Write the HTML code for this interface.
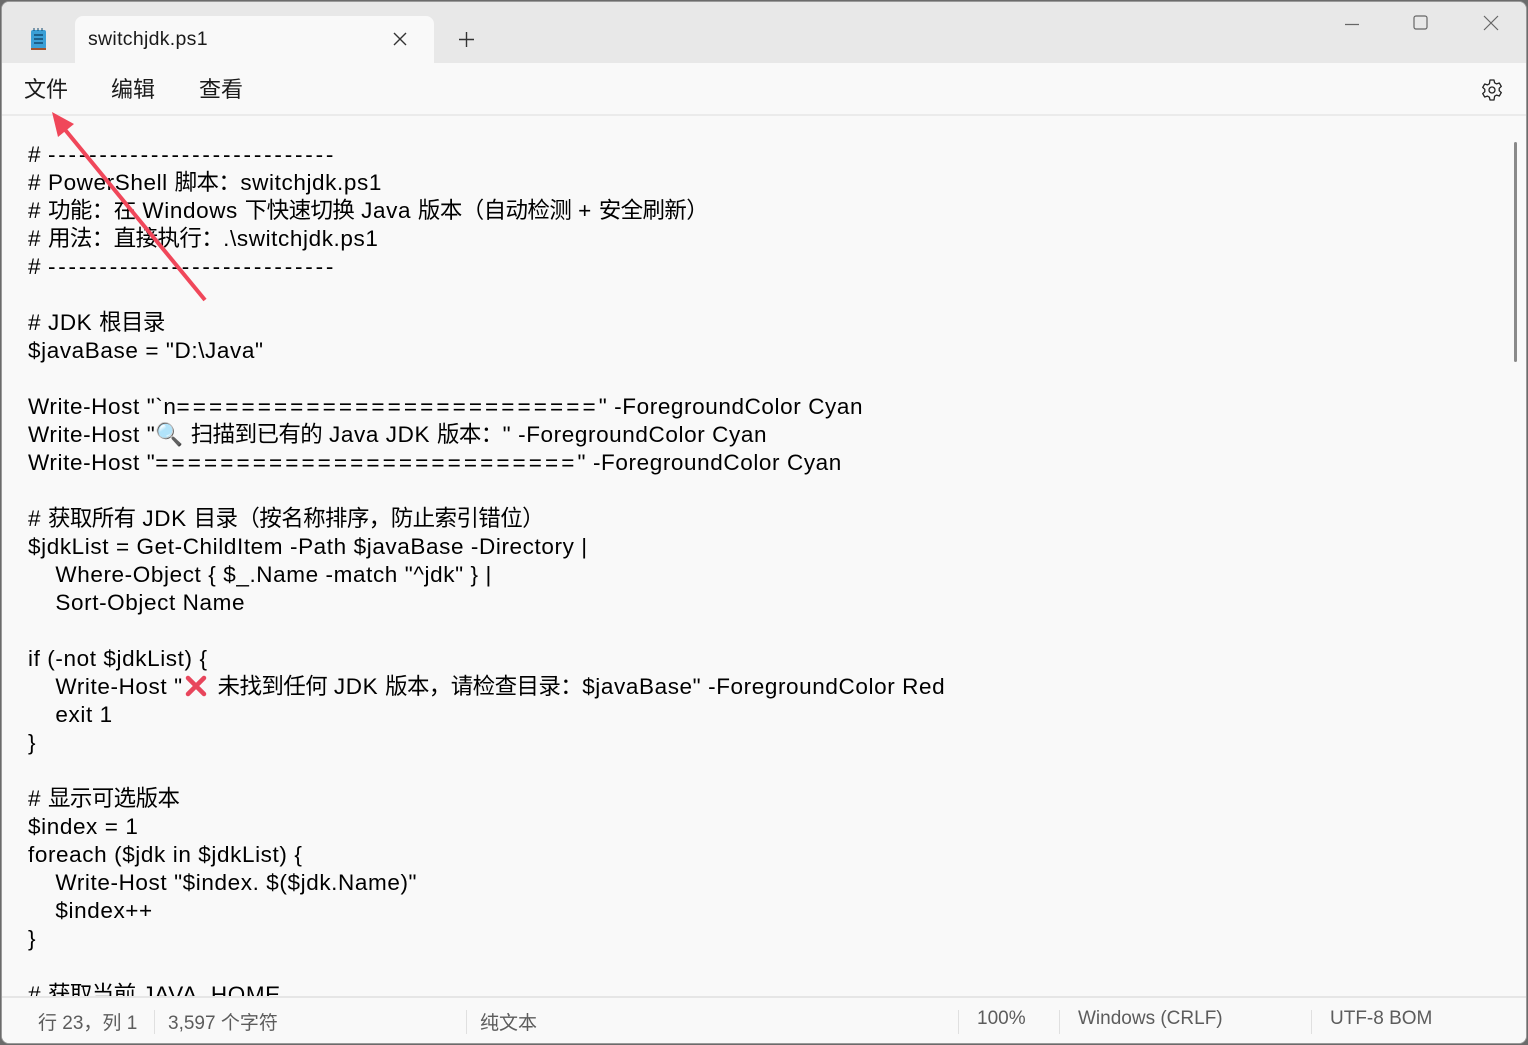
<!DOCTYPE html>
<html><head><meta charset="utf-8"><style>
*{margin:0;padding:0;box-sizing:border-box}
body{width:1528px;height:1045px;background:#6b6b6b;position:relative;overflow:hidden;font-family:"Liberation Sans","Noto Sans CJK SC",sans-serif}
.win{position:absolute;left:1px;top:1px;width:1526px;height:1043px;background:#f9f9f9;border:1px solid #9a9a9a;border-radius:8px;overflow:hidden}
.title{position:absolute;left:0;top:0;width:100%;height:61px;background:#e8e8e8}
.tab{position:absolute;left:73px;top:14px;width:359px;height:48px;background:#f9f9f9;border-radius:8px 8px 0 0}
.tab span{position:absolute;left:13px;top:12px;font-size:19.5px;color:#1a1a1a;letter-spacing:0.3px}
.menu{position:absolute;top:70px;font-size:22px;color:#1a1a1a}
.sep{position:absolute;left:0;top:112px;width:100%;height:2px;background:#ebebeb}
.l{position:absolute;left:26px;font-size:22.5px;line-height:28px;white-space:pre;color:#000;letter-spacing:0.6px}
.l b{font-weight:normal;letter-spacing:-0.6px}
.e{letter-spacing:3.1px}
.d{letter-spacing:2.8px}
.sb{position:absolute;left:0;top:994px;width:100%;height:50px;background:#f9f9f9;border-top:2px solid #e6e6e6}
.st{position:absolute;top:1006px;font-size:19px;color:#5c5c5c}
.vs{position:absolute;top:1008px;width:1px;height:24px;background:#e0e0e0}
</style></head><body>
<div class="win">
<div class="title"></div>
<svg style="position:absolute;left:27px;top:25px" width="20" height="26" viewBox="0 0 20 26"><rect x="2" y="3" width="15" height="19" rx="2" fill="#3a9fd6"/><rect x="2" y="21" width="15" height="2" fill="#a0522d"/><g stroke="#124a70" stroke-width="1.5"><line x1="5" y1="8" x2="14" y2="8"/><line x1="5" y1="12" x2="14" y2="12"/><line x1="5" y1="16" x2="14" y2="16"/></g><g stroke="#124a70" stroke-width="1"><line x1="5" y1="1" x2="5" y2="4"/><line x1="9" y1="1" x2="9" y2="4"/><line x1="13" y1="1" x2="13" y2="4"/></g></svg>
<div class="tab"><span>switchjdk.ps1</span>
<svg style="position:absolute;left:318px;top:16px" width="14" height="14"><path d="M1 1L13 13M13 1L1 13" stroke="#333" stroke-width="1.4"/></svg></div>
<svg style="position:absolute;left:456px;top:29px" width="17" height="17"><path d="M8.5 1V16M1 8.5H16" stroke="#333" stroke-width="1.4"/></svg>
<svg style="position:absolute;left:1342px;top:21px" width="16" height="4"><path d="M1 1.5H15" stroke="#666" stroke-width="1.2"/></svg>
<svg style="position:absolute;left:1411px;top:13px" width="16" height="16"><rect x="1" y="1" width="13" height="13" rx="2" fill="none" stroke="#666" stroke-width="1.2"/></svg>
<svg style="position:absolute;left:1481px;top:13px" width="17" height="17"><path d="M1 1L15 15M15 1L1 15" stroke="#666" stroke-width="1.2"/></svg>
<div class="menu" style="left:22px">文件</div>
<div class="menu" style="left:109px">编辑</div>
<div class="menu" style="left:197px">查看</div>
<svg style="position:absolute;left:1478px;top:76px" width="24" height="24" viewBox="0 0 24 24"><path d="M10 2h4l.6 2.8 2 1.1 2.7-.9 2 3.4-2.1 1.9v2.4l2.1 1.9-2 3.4-2.7-.9-2 1.1L14 22h-4l-.6-2.8-2-1.1-2.7.9-2-3.4 2.1-1.9v-2.4L2.7 9.4l2-3.4 2.7.9 2-1.1z" fill="none" stroke="#222" stroke-width="1.3" stroke-linejoin="round"/><circle cx="12" cy="12" r="3" fill="none" stroke="#222" stroke-width="1.3"/></svg>
<div class="sep"></div>
<div class="l" style="top:139px"># <span class="d">----------------------------</span></div>
<div class="l" style="top:167px"># PowerShell <b>脚本：</b>switchjdk.ps1</div>
<div class="l" style="top:195px"># <b>功能：在</b> Windows <b>下快速切换</b> Java <b>版本（自动检测</b> + <b>安全刷新）</b></div>
<div class="l" style="top:223px"># <b>用法：直接执行：</b>.\switchjdk.ps1</div>
<div class="l" style="top:251px"># <span class="d">----------------------------</span></div>
<div class="l" style="top:307px"># JDK <b>根目录</b></div>
<div class="l" style="top:335px">$javaBase = "D:\Java"</div>
<div class="l" style="top:391px">Write-Host "`n<span class="e">==========================</span>" -ForegroundColor Cyan</div>
<div class="l" style="top:419px">Write-Host "<span style="color:#3aa7d8">🔍</span> <b>扫描到已有的</b> Java JDK <b>版本：</b>" -ForegroundColor Cyan</div>
<div class="l" style="top:447px">Write-Host "<span class="e">==========================</span>" -ForegroundColor Cyan</div>
<div class="l" style="top:503px"># <b>获取所有</b> JDK <b>目录（按名称排序，防止索引错位）</b></div>
<div class="l" style="top:531px">$jdkList = Get-ChildItem -Path $javaBase -Directory |</div>
<div class="l" style="top:559px">    Where-Object { $_.Name -match "^jdk" } |</div>
<div class="l" style="top:587px">    Sort-Object Name</div>
<div class="l" style="top:643px">if (-not $jdkList) {</div>
<div class="l" style="top:671px">    Write-Host "<svg width="28" height="22" viewBox="0 0 28 22" style="vertical-align:-3px"><path d="M5 3L21 19M21 3L5 19" stroke="#e8465c" stroke-width="4.5" stroke-linecap="round"/></svg> <b>未找到任何</b> JDK <b>版本，请检查目录：</b>$javaBase" -ForegroundColor Red</div>
<div class="l" style="top:699px">    exit 1</div>
<div class="l" style="top:727px">}</div>
<div class="l" style="top:783px"># <b>显示可选版本</b></div>
<div class="l" style="top:811px">$index = 1</div>
<div class="l" style="top:839px">foreach ($jdk in $jdkList) {</div>
<div class="l" style="top:867px">    Write-Host "$index. $($jdk.Name)"</div>
<div class="l" style="top:895px">    $index++</div>
<div class="l" style="top:923px">}</div>
<div class="l" style="top:979px"># <b>获取当前</b> JAVA_HOME</div>
<div style="position:absolute;left:1512px;top:140px;width:3px;height:220px;background:#8a8a8a;border-radius:2px"></div>
<div class="sb"></div>
<div class="st" style="left:36px">行 23，列 1</div>
<div class="vs" style="left:152px"></div>
<div class="st" style="left:166px">3,597 个字符</div>
<div class="vs" style="left:464px"></div>
<div class="st" style="left:478px">纯文本</div>
<div class="vs" style="left:956px"></div>
<div class="st" style="left:975px">100%</div>
<div class="vs" style="left:1057px"></div>
<div class="st" style="left:1076px">Windows (CRLF)</div>
<div class="vs" style="left:1309px"></div>
<div class="st" style="left:1328px">UTF-8 BOM</div>
</div>
<svg style="position:absolute;left:0;top:0" width="1528" height="1045"><line x1="205" y1="300" x2="62" y2="126" stroke="#f0475a" stroke-width="4"/><polygon points="52,112 74,124 58,137" fill="#f0475a"/></svg>
</body></html>
